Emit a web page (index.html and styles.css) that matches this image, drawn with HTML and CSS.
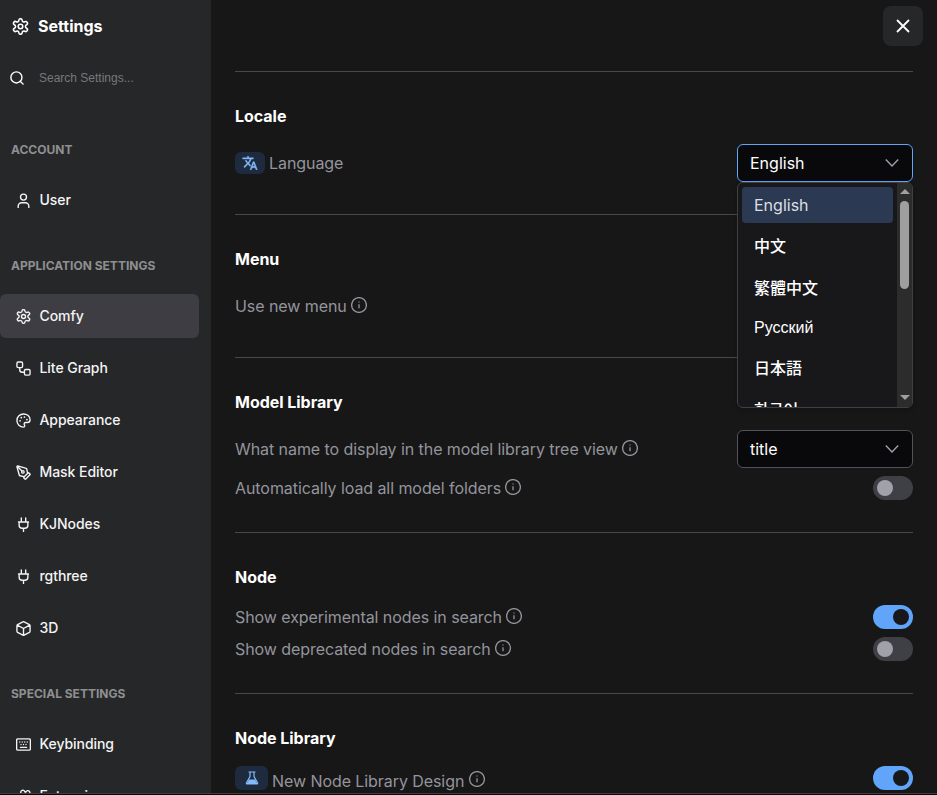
FILE: index.html
```html
<!DOCTYPE html>
<html lang="en">
<head>
    <meta charset="UTF-8">
    <meta name="viewport" content="width=device-width, initial-scale=1.0">
    <title>Settings</title>
    <link rel="stylesheet" href="styles.css">
</head>
<body>
    <!-- shared icons -->
    <svg class="sprite" width="0" height="0">
        <symbol id="i-settings" viewBox="0 0 24 24">
            <path d="M9.671 3.136a2.34 2.34 0 0 1 4.659 0 2.500 2.500 0 0 0 3.719 2.115 2.500 2.500 0 0 1 2.530 4.333 2.600 2.600 0 0 0 0 4.831 2.500 2.500 0 0 1-2.530 4.333 2.500 2.500 0 0 0-3.719 2.115 2.340 2.340 0 0 1-4.659 0 2.500 2.500 0 0 0-3.720-2.115 2.500 2.500 0 0 1-2.530-4.333 2.600 2.600 0 0 0 0-4.831A2.500 2.500 0 0 1 5.950 5.251a2.500 2.500 0 0 0 3.719-2.115"/>
            <circle cx="12" cy="12" r="3.2"/>
        </symbol>
        <symbol id="i-plug" viewBox="0 0 24 24">
            <path d="M12 23v-5M8.500 8V1.500M15.500 8V1.500M19 8v5a5 5 0 0 1-5 5h-4a5 5 0 0 1-5-5V8ZM4 8h16"/>
        </symbol>
        <symbol id="i-info" viewBox="0 0 16 16">
            <circle cx="8" cy="8" r="7.4"/>
            <path d="M8 7.2v4M8 4.4v1.2"/>
        </symbol>
        <symbol id="i-chevron" viewBox="0 0 14 14">
            <path d="M0.8 3.500 7 9.900 13.2 3.500"/>
        </symbol>
    </svg>

    <div class="dialog">
        <aside class="sidebar">
            <header class="sidebar-header">
                <svg class="icon icon-header"><use href="#i-settings"/></svg>
                <h1>Settings</h1>
            </header>
            <div class="search">
                <svg class="icon icon-search" viewBox="0 0 24 24"><circle cx="11" cy="11" r="9.5"/><path d="m22.5 22.5-5-5"/></svg>
                <span class="search-text">Search Settings...</span>
            </div>

            <nav>
                <h3 class="group-label">ACCOUNT</h3>
                <ul class="group">
                    <li class="item">
                        <svg class="icon" viewBox="0 0 24 24"><circle cx="12" cy="6.500" r="4.800"/><path d="M20.500 23v-2a5.500 5.500 0 0 0-5.500-5.500H9A5.500 5.500 0 0 0 3.500 21v2"/></svg>
                        <span>User</span>
                    </li>
                </ul>

                <h3 class="group-label">APPLICATION SETTINGS</h3>
                <ul class="group">
                    <li class="item active">
                        <svg class="icon"><use href="#i-settings"/></svg>
                        <span>Comfy</span>
                    </li>
                    <li class="item">
                        <svg class="icon" viewBox="0 0 24 24"><rect x="1.5" y="1.5" width="9" height="9" rx="2"/><rect x="13.5" y="13.5" width="9" height="9" rx="2"/><path d="M6 10.5V14a4 4 0 0 0 4 4h3.5"/></svg>
                        <span>Lite Graph</span>
                    </li>
                    <li class="item">
                        <svg class="icon" viewBox="0 0 24 24"><path d="M12 1.5a10.5 10.5 0 0 0 0 21c1.2 0 2-.9 2-2 0-1.300-1-1.700-1-3a2.250 2.250 0 0 1 2.250-2.250H18c2.500 0 4.500-2 4.500-4.500C22.500 5.500 17.800 1.500 12 1.500Z"/><g class="dots"><circle cx="13.5" cy="6.500" r="1.400"/><circle cx="17.500" cy="10.500" r="1.400"/><circle cx="8.500" cy="7.500" r="1.400"/><circle cx="6.500" cy="12.500" r="1.400"/></g></svg>
                        <span>Appearance</span>
                    </li>
                    <li class="item">
                        <svg class="icon" viewBox="0 0 24 24"><path d="M15.707 22.293a1 1 0 0 1-1.414 0l-1.586-1.586a1 1 0 0 1 0-1.414l6.586-6.586a1 1 0 0 1 1.414 0l1.586 1.586a1 1 0 0 1 0 1.414z"/><path d="m18.500 13-1.375-6.874a1 1 0 0 0-.746-.776L2.735 1.528a1 1 0 0 0-1.207 1.207L5.350 16.379a1 1 0 0 0 .776.746L13 18.500M2 2l7.586 7.586"/><circle cx="11" cy="11" r="2"/></svg>
                        <span>Mask Editor</span>
                    </li>
                    <li class="item">
                        <svg class="icon"><use href="#i-plug"/></svg>
                        <span>KJNodes</span>
                    </li>
                    <li class="item">
                        <svg class="icon"><use href="#i-plug"/></svg>
                        <span>rgthree</span>
                    </li>
                    <li class="item">
                        <svg class="icon" viewBox="0 0 24 24"><path d="M22.500 7.500a2 2 0 0 0-1-1.730l-8.500-4.500a2 2 0 0 0-2 0L2.500 5.770a2 2 0 0 0-1 1.730v9a2 2 0 0 0 1 1.730l8.500 4.500a2 2 0 0 0 2 0l8.500-4.500a2 2 0 0 0 1-1.730ZM2 6.500l10 5.500 10-5.500M12 23V12"/></svg>
                        <span>3D</span>
                    </li>
                </ul>

                <h3 class="group-label">SPECIAL SETTINGS</h3>
                <ul class="group">
                    <li class="item">
                        <svg class="icon" viewBox="0 0 24 24"><rect x="1" y="3" width="22" height="18" rx="2"/><path d="M6 8h.01M10 8h.01M14 8h.01M18 8h.01M8 12h.01M12 12h.01M16 12h.01M7 16.500h10"/></svg>
                        <span>Keybinding</span>
                    </li>
                    <li class="item">
                        <svg class="icon" viewBox="0 0 24 24"><path d="M8.500 7.500a3.300 3.300 0 1 1 5.600-3.200q1 1.700 2 0a3.300 3.300 0 1 1 4.600 4.400l1.800 2a2.400 2.400 0 0 1 0 3.400l-7.100 7.100a2.400 2.400 0 0 1-3.400 0l-8-8a2.400 2.400 0 0 1 0-3.400Z"/></svg>
                        <span>Extension</span>
                    </li>
                </ul>
            </nav>
        </aside>

        <main class="content">
            <button class="close" aria-label="Close">
                <svg viewBox="0 0 14 14"><path d="M1 1l12 12M13 1 1 13"/></svg>
            </button>

            <section class="section">
                <h2>Locale</h2>
                <div class="row">
                    <div class="label">
                        <span class="tag tag-lang"><svg viewBox="0 0 24 24"><path d="m12.870 15.070-2.540-2.510.03-.03A17.500 17.500 0 0 0 14.070 6H17V4h-7V2H8v2H1v2h11.170C11.500 7.920 10.440 9.750 9 11.350 8.070 10.320 7.300 9.190 6.690 8h-2c.73 1.630 1.730 3.170 2.980 4.560l-5.090 5.020L4 19l5-5 3.110 3.110zM18.500 10h-2L12 22h2l1.120-3h4.750L21 22h2zm-2.620 7 1.620-4.330L19.120 17z"/></svg></span>
                        <span>Language</span>
                    </div>
                    <div class="select open">
                        <span>English</span>
                        <svg class="chevron"><use href="#i-chevron"/></svg>
                        <div class="menu">
                            <ul class="options">
                                <li class="selected">English</li>
                                <li class="cjk">中文</li>
                                <li class="cjk">繁體中文</li>
                                <li class="cyr">Русский</li>
                                <li class="cjk jp">日本語</li>
                                <li class="cjk kr">한국어</li>
                            </ul>
                            <div class="scrollbar">
                                <span class="arrow up"></span>
                                <span class="thumb"></span>
                                <span class="arrow down"></span>
                            </div>
                        </div>
                    </div>
                </div>
            </section>

            <section class="section">
                <h2>Menu</h2>
                <div class="row tall">
                    <div class="label"><span>Use new menu</span><svg class="info"><use href="#i-info"/></svg></div>
                </div>
            </section>

            <section class="section">
                <h2>Model Library</h2>
                <div class="row">
                    <div class="label"><span>What name to display in the model library tree view</span><svg class="info"><use href="#i-info"/></svg></div>
                    <div class="select">
                        <span>title</span>
                        <svg class="chevron"><use href="#i-chevron"/></svg>
                    </div>
                </div>
                <div class="row">
                    <div class="label"><span>Automatically load all model folders</span><svg class="info"><use href="#i-info"/></svg></div>
                    <div class="toggle"></div>
                </div>
            </section>

            <section class="section">
                <h2>Node</h2>
                <div class="row">
                    <div class="label"><span>Show experimental nodes in search</span><svg class="info"><use href="#i-info"/></svg></div>
                    <div class="toggle on"></div>
                </div>
                <div class="row">
                    <div class="label"><span>Show deprecated nodes in search</span><svg class="info"><use href="#i-info"/></svg></div>
                    <div class="toggle"></div>
                </div>
            </section>

            <section class="section">
                <h2>Node Library</h2>
                <div class="row">
                    <div class="label">
                        <span class="tag tag-flask"><svg viewBox="0 0 14 14"><path class="line" d="M3.500 1h7M5 1v4.500L1.500 11.800Q1 13 2.300 13h9.400q1.300 0 .8-1.200L9 5.500V1"/><path d="M4 8.500h6l2.500 4.500h-11z"/></svg></span>
                        <span class="low">New Node Library Design</span><svg class="info info-low"><use href="#i-info"/></svg>
                    </div>
                    <div class="toggle on"></div>
                </div>
            </section>
        </main>
    </div>
</body>
</html>
```

FILE: styles.css
```css
* {
    box-sizing: border-box;
}
body {
    margin: 0;
    height: 795px;
    overflow: hidden;
    background-color: #080809;
    color: #fff;
    font-family: Inter, "Noto Sans CJK SC", sans-serif;
    font-size: 16px;
}
h1, h2, h3, ul {
    margin: 0;
    padding: 0;
    list-style: none;
}
.sprite {
    position: absolute;
}
.dialog {
    display: flex;
    height: 794px;
    overflow: hidden;
    background-color: #171718;
    border-bottom: 1px solid #3f3f43;
}

/* sidebar */
.sidebar {
    width: 211px;
    flex-shrink: 0;
    background-color: #262729;
}
.sidebar-header {
    display: flex;
    align-items: center;
    gap: 9px;
    height: 52px;
    padding-left: 12px;
}
h1 {
    font-size: 16px;
    font-weight: 700;
}
.icon {
    width: 15px;
    height: 15px;
    flex-shrink: 0;
    fill: none;
    stroke: currentColor;
    stroke-width: 2.2;
    stroke-linecap: round;
    stroke-linejoin: round;
}
.icon-header {
    width: 17px;
    height: 17px;
}
.icon-search {
    width: 14px;
    height: 14px;
    stroke-width: 2.4;
}
.dots {
    fill: currentColor;
    stroke: none;
}
.search {
    display: flex;
    align-items: center;
    gap: 15px;
    height: 52px;
    padding-left: 10px;
}
.search-text {
    font-family: "Liberation Sans", Arial, sans-serif;
    font-size: 12px;
    color: #77787b;
}
.group-label {
    height: 16px;
    margin: 36px 0 20px 11px;
    font-size: 12px;
    line-height: 16px;
    font-weight: 700;
    color: #8f8f91;
}
nav .group-label:first-child {
    margin-top: 38px;
}
.group {
    display: flex;
    flex-direction: column;
    gap: 8px;
}
.item {
    display: flex;
    align-items: center;
    gap: 8.5px;
    height: 44px;
    width: 199px;
    padding-left: 16px;
    border-radius: 0 6px 6px 0;
    font-size: 14px;
    font-weight: 500;
    letter-spacing: -0.06px;
    color: #f4f4f5;
}
.item .icon {
    margin-top: 1px;
}
.item span {
    padding-bottom: 2px;
}
.item.active {
    background-color: #3d3d43;
    border-radius: 6px;
}

/* content */
.content {
    position: relative;
    flex: 1;
    padding: 71px 24px 0;
}
.close {
    position: absolute;
    top: 6px;
    right: 14px;
    display: flex;
    align-items: center;
    justify-content: center;
    width: 40px;
    height: 40px;
    padding: 0;
    border: none;
    border-radius: 8px;
    background-color: #262729;
}
.close svg {
    width: 14px;
    height: 14px;
    stroke: #fff;
    stroke-width: 1.8;
}
.section {
    display: flex;
    flex-direction: column;
    gap: 8px;
    padding: 32px 0;
    border-top: 1px solid #48484b;
}
h2 {
    height: 24px;
    margin-bottom: 8px;
    font-size: 16px;
    line-height: 24px;
    font-weight: 700;
    letter-spacing: -0.03px;
}
.row {
    display: flex;
    align-items: center;
    justify-content: space-between;
}
.row.tall {
    height: 38px;
}
.label {
    display: flex;
    align-items: center;
    height: 24px;
    letter-spacing: -0.07px;
    color: #94949c;
}
.info {
    width: 16px;
    height: 16px;
    margin: -2px 0 0 4px;
    overflow: visible;
    fill: none;
    stroke: currentColor;
    stroke-width: 1.3;
}
.info-low {
    margin: 2px 0 0 5px;
}
.low {
    margin-top: 6px;
}
.tag {
    display: flex;
    align-items: center;
    justify-content: center;
    margin-right: 4px;
    border-radius: 6px;
    background-color: #1e2b3f;
    color: #84b9fa;
}
.tag svg {
    fill: currentColor;
}
.tag-lang {
    width: 30px;
    height: 22px;
}
.tag-lang svg {
    width: 16px;
    height: 16px;
    stroke: currentColor;
    stroke-width: 0.6;
}
.tag-flask {
    width: 33px;
    height: 24px;
}
.tag-flask svg {
    width: 14px;
    height: 14px;
}
.tag-flask .line {
    fill: none;
    stroke: currentColor;
    stroke-width: 1.2;
}

.select {
    position: relative;
    display: flex;
    align-items: center;
    justify-content: space-between;
    width: 176px;
    height: 38px;
    padding: 0 13px 0 12px;
    border: 1px solid #52525b;
    border-radius: 6px;
    background-color: #09090b;
}
.select.open {
    border-color: #60a5fa;
}
.chevron {
    width: 14px;
    height: 14px;
    fill: none;
    stroke: #a1a1aa;
    stroke-width: 1.4;
}
.menu {
    position: absolute;
    z-index: 1;
    top: 37px;
    left: -1px;
    display: flex;
    width: 176px;
    height: 226px;
    overflow: hidden;
    border: 1px solid #3f3f46;
    border-radius: 6px;
    background-color: #18181b;
    box-shadow: 0 2px 4px rgba(0, 0, 0, 0.2);
}
.options {
    display: flex;
    flex-direction: column;
    flex: 1;
    gap: 2px;
    padding: 4px;
}
.options li {
    flex-shrink: 0;
    height: 36px;
    padding-left: 12px;
    line-height: 36px;
    border-radius: 4px;
}
.options .selected {
    background-color: #2b3a52;
    color: #dbdfe5;
}
.options .cjk {
    height: 40px;
    line-height: 40px;
    font-family: "Noto Sans CJK SC", sans-serif;
    font-weight: 500;
}
.options .jp {
    font-family: "Noto Sans CJK JP", sans-serif;
}
.options .kr {
    font-family: "Noto Sans CJK KR", sans-serif;
}
.options .cyr {
    line-height: 38px;
    font-family: "Liberation Sans", Arial, sans-serif;
}
.scrollbar {
    display: flex;
    flex-direction: column;
    align-items: center;
    width: 15px;
    padding: 6px 0 7px;
    background-color: #2c2c2c;
}
.thumb {
    width: 9px;
    height: 88px;
    margin-top: 7px;
    border-radius: 5px;
    background-color: #9f9f9f;
}
.arrow {
    border: 5px solid transparent;
}
.arrow.up {
    border-top: none;
    border-bottom: 5px solid #9f9f9f;
}
.arrow.down {
    margin-top: auto;
    border-bottom: none;
    border-top: 5px solid #9f9f9f;
}

.toggle {
    width: 40px;
    height: 24px;
    padding: 4px;
    border-radius: 12px;
    background-color: #3f3f46;
}
.toggle::before {
    content: "";
    display: block;
    width: 16px;
    height: 16px;
    border-radius: 50%;
    background-color: #a1a1aa;
}
.toggle.on {
    background-color: #60a5fa;
}
.toggle.on::before {
    margin-left: auto;
    background-color: #18181b;
}
```
